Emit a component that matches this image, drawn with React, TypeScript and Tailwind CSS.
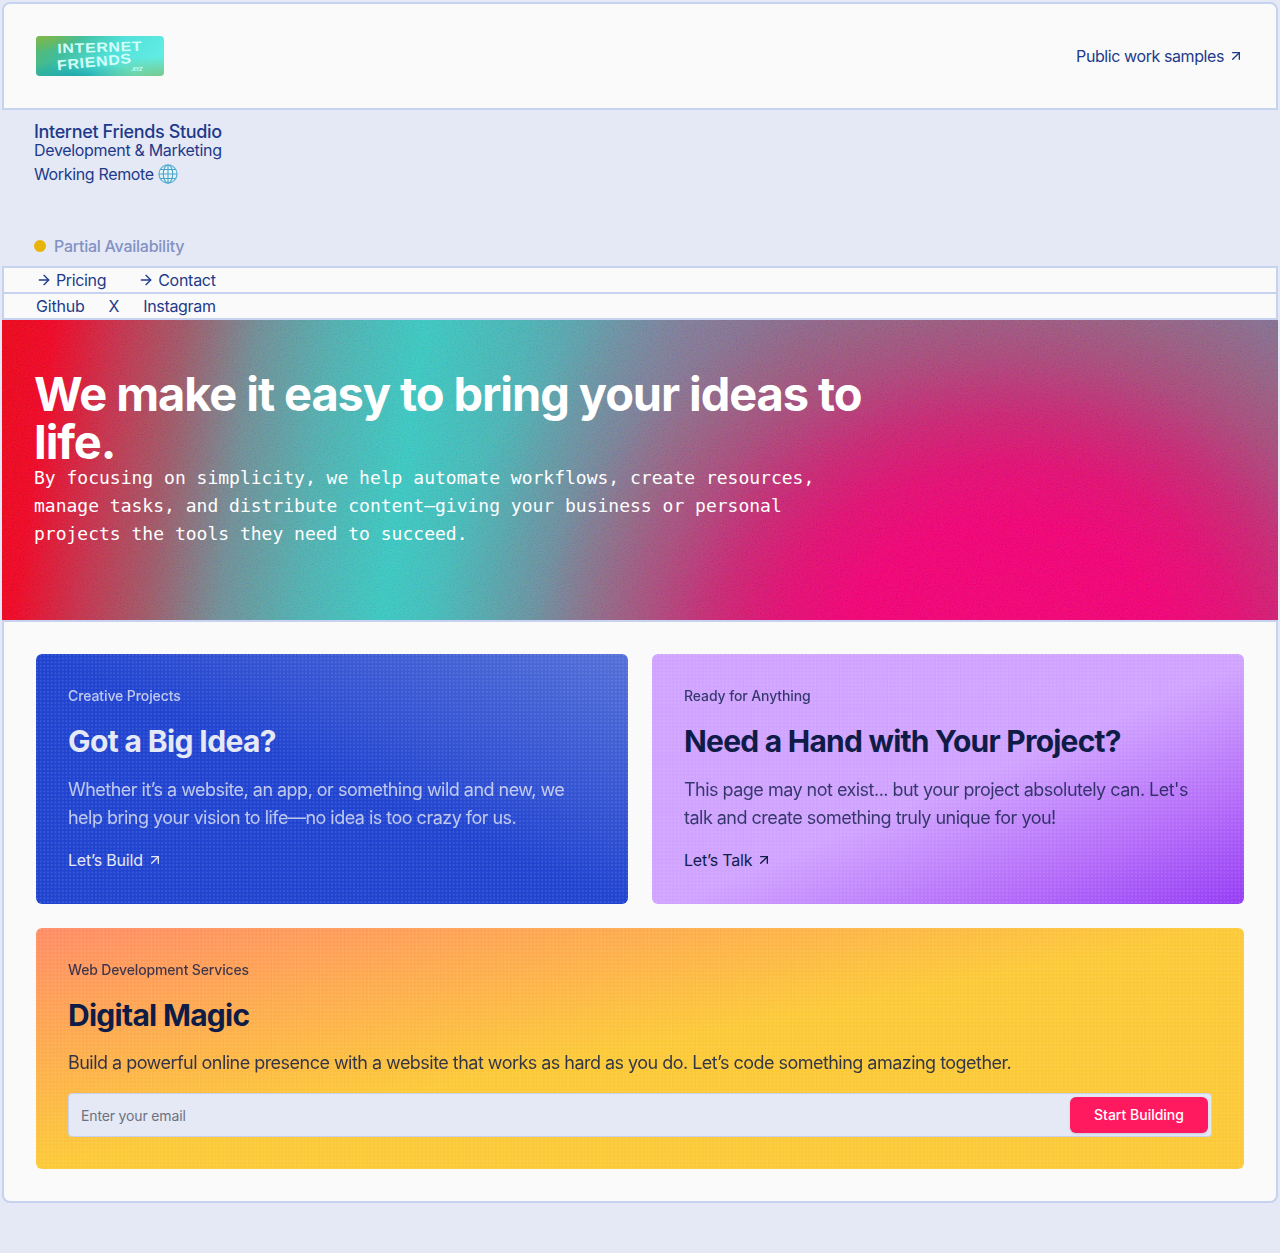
import { ArrowRight, ArrowUpRight } from "lucide-react";

const GRAIN =
  "[background-image:conic-gradient(from_270deg_at_2px_2px,rgba(255,255,255,0.11)_90deg,transparent_0)] [background-size:3.7px_3.7px]";

function Logo() {
  return (
    <svg width="128" height="40" viewBox="0 0 128 40" className="rounded" aria-label="Internet Friends">
      <defs>
        <linearGradient id="lg" x1="0" y1="0" x2="1" y2="0.3">
          <stop offset="0" stopColor="#5fb860" />
          <stop offset="0.3" stopColor="#40bd9c" />
          <stop offset="0.65" stopColor="#52e0da" />
          <stop offset="1" stopColor="#60ece4" />
        </linearGradient>
        <radialGradient id="lg1" cx="0" cy="0" r="0.4">
          <stop offset="0" stopColor="#80b84c" />
          <stop offset="1" stopColor="#80b84c" stopOpacity="0" />
        </radialGradient>
        <radialGradient id="lg2" cx="0.3" cy="1.1" r="0.5">
          <stop offset="0" stopColor="#149fa5" />
          <stop offset="1" stopColor="#149fa5" stopOpacity="0" />
        </radialGradient>
        <radialGradient id="lg3" cx="1" cy="1.1" r="0.6">
          <stop offset="0" stopColor="#7cc47c" />
          <stop offset="1" stopColor="#7cc47c" stopOpacity="0" />
        </radialGradient>
      </defs>
      <rect width="128" height="40" fill="url(#lg)" />
      <rect width="128" height="40" fill="url(#lg1)" />
      <rect width="128" height="40" fill="url(#lg2)" />
      <rect width="128" height="40" fill="url(#lg3)" />
      <g fill="#d4fff8" fontFamily="Liberation Sans, sans-serif" fontWeight="700">
        <text x="21.500" y="17.300" fontSize="13.5" letterSpacing="0.6" textLength="85" lengthAdjust="spacingAndGlyphs" transform="rotate(-1.8 21 18)">INTERNET</text>
        <text x="21.500" y="34.200" fontSize="14" letterSpacing="0.6" textLength="75" lengthAdjust="spacingAndGlyphs" transform="rotate(-5.5 21 34)">FRIENDS</text>
        <text x="95" y="34.500" fontSize="5" fontStyle="italic" textLength="11" lengthAdjust="spacingAndGlyphs">.XYZ</text>
      </g>
    </svg>
  );
}

function Globe() {
  return (
    <svg width="20" height="20" viewBox="0 0 20 20" fill="none">
      <circle cx="10" cy="10" r="9" fill="#e6f4fa" stroke="#5fb4d6" strokeWidth="1.300" />
      <g stroke="#4aa3c8" strokeWidth="1.100">
        <ellipse cx="10" cy="10" rx="4.700" ry="9" />
        <path d="M10 1v18M1 10h18M2.500 5.500h15M2.500 14.500h15" />
      </g>
    </svg>
  );
}

function Hero() {
  return (
    <section className="relative h-[300px] overflow-hidden bg-[linear-gradient(98deg,#ee0418_0%,#f20424_4%,#c8304c_9%,#a05868_14%,#708f98_19.500%,#50b2b2_25.500%,#3acac4_32%,#4cb4b6_40%,#6898a8_46.500%,#7c84a0_52%,#80789a_60%,#80789a_100%)] pl-8 pt-12 text-white">
      <div className="absolute inset-0 bg-[radial-gradient(ellipse_500px_430px_at_1005px_350px,#f60076_0%,#f40076_34%,rgba(236,4,112,0.92)_48%,rgba(224,14,106,0.78)_60%,rgba(206,36,100,0.56)_73%,rgba(190,56,96,0.4)_84%,rgba(170,70,110,0.2)_95%,rgba(160,80,120,0)_116%)]" />
      <svg className="absolute inset-0 h-full w-full opacity-[0.06]">
        <filter id="noise" x="0" y="0" width="100%" height="100%">
          <feTurbulence type="fractalNoise" baseFrequency="0.7" numOctaves="2" />
          <feColorMatrix values="2.5 0 0 0 -0.75  0 2.5 0 0 -0.75  0 0 2.5 0 -0.75  0 0 0 0 1" />
        </filter>
        <rect width="100%" height="100%" filter="url(#noise)" />
      </svg>
      <div className="relative">
        <h1 className="w-[860px] pt-0.5 text-[47px] font-bold leading-[48px] tracking-[-1.100px]">We make it easy to bring your ideas to life.</h1>
        <p className="-mt-0.5 w-[800px] font-['DejaVu_Sans_Mono',monospace] text-lg leading-7 tracking-normal">
          By focusing on simplicity, we help automate workflows, create resources, manage tasks, and distribute content—giving your business or personal projects the tools they need to succeed.
        </p>
      </div>
    </section>
  );
}

type CardProps = { tone: string; bg: string; titleTracking: string; eyebrow: string; title: string; body: string; cta: string };

function Card({ tone, bg, titleTracking, eyebrow, title, body, cta }: CardProps) {
  return (
    <article className={`h-[250px] overflow-hidden rounded-md ${bg}`}>
      <div className={`h-full px-8 pt-8 ${tone} ${GRAIN}`}>
        <p className="text-sm font-[450] tracking-[-0.100px] opacity-80">{eyebrow}</p>
        <h2 className={`mt-[17px] text-[30px] font-bold leading-9 ${titleTracking}`}>{title}</h2>
        <p className="mt-[17px] w-[528px] text-lg leading-7 tracking-[-0.520px] opacity-80">{body}</p>
        <a className="mt-4 flex items-center gap-1 text-base leading-6 tracking-[-0.200px]">
          {cta} <ArrowUpRight size={16} strokeWidth={2} />
        </a>
      </div>
    </article>
  );
}

export default function App() {
  return (
    <main className="h-[1253px] bg-[#e5e8f5] px-0.5 pt-0.5 font-['Inter',sans-serif] tracking-[-0.320px] text-[#1e3a8a]">
      <header className="flex h-[108px] items-center justify-between rounded-t-lg border-2 border-[#c7d2f0] bg-[#fafafa] px-8">
        <Logo />
        <a className="flex items-center gap-1 tracking-[-0.410px]">
          Public work samples <ArrowUpRight size={16} />
        </a>
      </header>
      <section className="h-[156px] px-8 pt-[13px]">
        <h3 className="text-lg font-medium leading-[18px] tracking-[-0.350px]">Internet Friends Studio</h3>
        <p className="-mt-px leading-5">Development &amp; Marketing</p>
        <p className="flex h-7 items-center gap-1 tracking-[-0.350px]">Working Remote <Globe /></p>
        <p className="mt-[46px] flex h-6 items-center gap-2 font-medium tracking-[-0.250px] text-[#8292c3]">
          <span className="size-3 rounded-full bg-[#eab308]" />
          Partial Availability
        </p>
      </section>
      <nav className="flex h-7 items-center gap-8 border-2 border-[#c7d2f0] bg-[#fafafa] px-8">
        <a className="flex items-center gap-1 tracking-[-0.360px]"><ArrowRight size={16} />Pricing</a>
        <a className="flex items-center gap-1 tracking-[-0.260px]"><ArrowRight size={16} />Contact</a>
      </nav>
      <nav className="flex h-[26px] items-center gap-6 border-x-2 border-b-2 border-[#c7d2f0] bg-[#fafafa] px-8">
        <a className="tracking-[-0.200px]">Github</a>
        <a>X</a>
        <a>Instagram</a>
      </nav>
      <Hero />
      <section className="h-[583px] rounded-b-lg border-2 border-[#c7d2f0] bg-[#fafafa] p-8">
        <div className="grid grid-cols-2 gap-6">
          <Card
            tone="text-[#e5e8f5]"
            bg="bg-[linear-gradient(to_top_right,#2144d0_50%,#5570d8_100%)]"
            titleTracking="tracking-[-0.620px]"
            eyebrow="Creative Projects"
            title="Got a Big Idea?"
            body="Whether it’s a website, an app, or something wild and new, we help bring your vision to life—no idea is too crazy for us."
            cta="Let’s Build"
          />
          <Card
            tone="text-[#0f1c47]"
            bg="bg-[linear-gradient(to_bottom_right,#d0a3ff_0%,#d0a3ff_52%,#b46cf9_78%,#963df5_100%)]"
            titleTracking="tracking-[-0.770px]"
            eyebrow="Ready for Anything"
            title="Need a Hand with Your Project?"
            body="This page may not exist... but your project absolutely can. Let's talk and create something truly unique for you!"
            cta="Let’s Talk"
          />
        </div>
        <article className="mt-6 h-[241px] overflow-hidden rounded-md bg-[linear-gradient(to_bottom_right,#ff8c66_0%,#fcca38_50%)]">
          <div className={`h-full px-8 pt-8 text-[#0f1c47] ${GRAIN}`}>
            <p className="text-sm font-[450] tracking-[-0.150px] opacity-80">Web Development Services</p>
            <h2 className="mt-[17px] text-[30px] font-bold leading-9 tracking-[-0.720px]">Digital Magic</h2>
            <p className="mt-4 text-lg leading-7 tracking-[-0.530px] opacity-85">Build a powerful online presence with a website that works as hard as you do. Let’s code something amazing together.</p>
            <div className="mt-4 flex h-11 items-center justify-between rounded border border-[#c7d2f0] bg-[#e5e8f5] pl-3 pr-[3px]">
              <span className="pt-0.5 text-sm tracking-[-0.150px] text-[#6b7280]">Enter your email</span>
              <button className="h-9 w-[138px] rounded-md bg-[#ff1a60] text-sm font-[450] tracking-normal text-white shadow">Start Building</button>
            </div>
          </div>
        </article>
      </section>
    </main>
  );
}
